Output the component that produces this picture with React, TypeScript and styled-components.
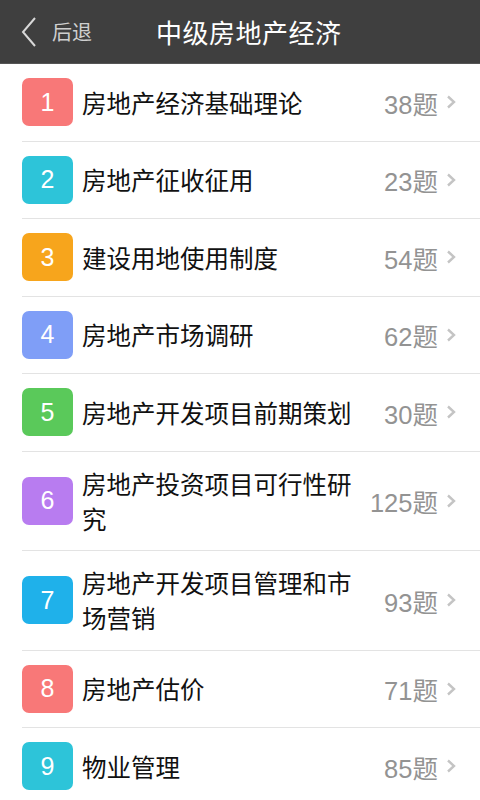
import React from "react";
import styled, { createGlobalStyle } from "styled-components";

const Global = createGlobalStyle`
  html, body { margin: 0; padding: 0; background: #ffffff; }
  body { font-family: "Noto Sans CJK SC", "Liberation Sans", sans-serif; }
`;

const Page = styled.div`
  width: 480px;
  min-height: 800px;
  background: #ffffff;
`;

const Header = styled.header`
  height: 64px;
  background: #3f3f3f;
  display: flex;
  align-items: center;
  box-sizing: border-box;
  border-bottom: 1px solid #555;
`;

const Back = styled.div`
  display: flex;
  align-items: center;
  gap: 15px;
  padding-left: 21px;
  color: #cfcfcf;
  font-size: 20px;
  width: 156px;
  box-sizing: border-box;
`;

const Title = styled.h1`
  margin: 0;
  font-weight: 400;
  font-size: 26px;
  color: #ffffff;
  letter-spacing: 0.5px;
`;

const List = styled.ul`
  list-style: none;
  margin: 0;
  padding: 0;
`;

const Row = styled.li`
  display: flex;
  align-items: center;
  padding: 14.25px 24px 14.25px 0;
  margin-left: 22px;
  border-bottom: 1px solid #e3e3e3;
`;

const Badge = styled.div<{ $color: string }>`
  flex: none;
  width: 51px;
  height: 48px;
  border-radius: 7px;
  background: ${(p) => p.$color};
  color: #ffffff;
  font-family: "Liberation Sans", "Noto Sans", sans-serif;
  font-size: 25px;
  display: flex;
  align-items: center;
  justify-content: center;
  margin-right: 9px;
`;

const Name = styled.div`
  flex: 1;
  font-size: 24.5px;
  line-height: 35px;
  color: #111111;
  max-width: 284px;
`;

const Count = styled.div`
  margin-left: auto;
  display: flex;
  align-items: center;
  color: #939393;
  font-size: 25.5px;
  font-family: "Liberation Sans", "Noto Sans CJK SC", sans-serif;
  white-space: nowrap;
`;

const Chevron = styled.svg`
  margin-left: 8px;
  flex: none;
`;

const items = [
  { n: 1, name: "房地产经济基础理论", count: 38, color: "#f87878" },
  { n: 2, name: "房地产征收征用", count: 23, color: "#2dc4d9" },
  { n: 3, name: "建设用地使用制度", count: 54, color: "#f7a51c" },
  { n: 4, name: "房地产市场调研", count: 62, color: "#7f9ef7" },
  { n: 5, name: "房地产开发项目前期策划", count: 30, color: "#5ac95a" },
  { n: 6, name: "房地产投资项目可行性研究", count: 125, color: "#b87cf0" },
  { n: 7, name: "房地产开发项目管理和市场营销", count: 93, color: "#1fb1ea" },
  { n: 8, name: "房地产估价", count: 71, color: "#f87878" },
  { n: 9, name: "物业管理", count: 85, color: "#2dc4d9" },
];

export default function App() {
  return (
    <Page>
      <Global />
      <Header>
        <Back>
          <svg width="16" height="30" viewBox="0 0 16 30">
            <polyline
              points="14,1 2,15 14,29"
              fill="none"
              stroke="#d8d8d8"
              strokeWidth="2"
            />
          </svg>
          <span>后退</span>
        </Back>
        <Title>中级房地产经济</Title>
      </Header>
      <List>
        {items.map((it) => (
          <Row key={it.n}>
            <Badge $color={it.color}>{it.n}</Badge>
            <Name>{it.name}</Name>
            <Count>
              {it.count}题
              <Chevron width="10" height="14" viewBox="0 0 10 14">
                <polyline
                  points="2,1.5 8,7 2,12.5"
                  fill="none"
                  stroke="#c4c4c4"
                  strokeWidth="2.4"
                />
              </Chevron>
            </Count>
          </Row>
        ))}
      </List>
    </Page>
  );
}
